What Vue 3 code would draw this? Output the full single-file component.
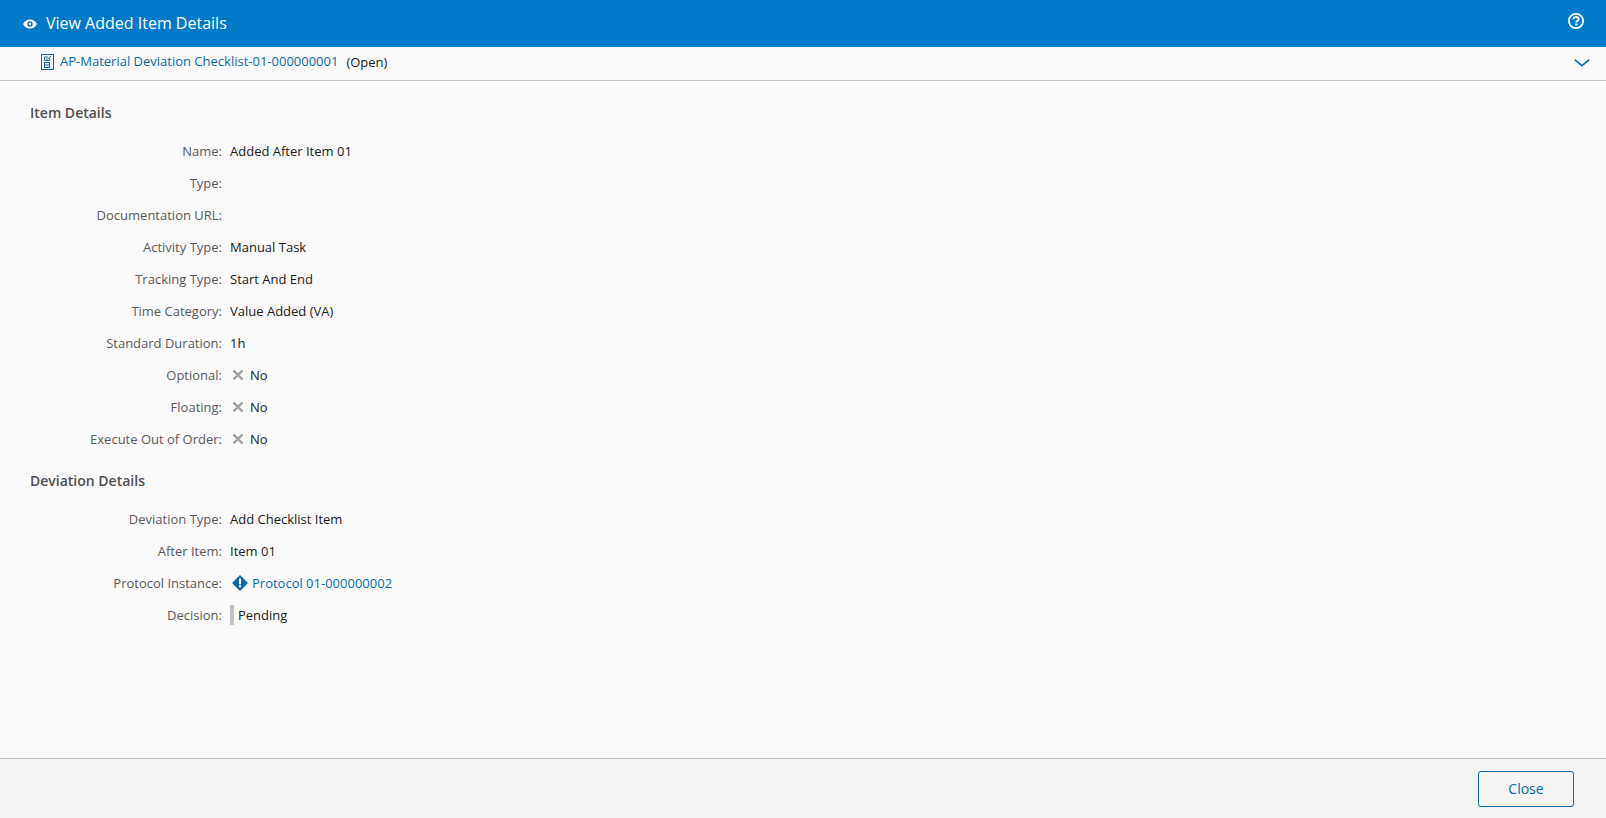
<script setup>
const itemRows = [
  { label: 'Name', value: 'Added After Item 01' },
  { label: 'Type', value: '' },
  { label: 'Documentation URL', value: '' },
  { label: 'Activity Type', value: 'Manual Task' },
  { label: 'Tracking Type', value: 'Start And End' },
  { label: 'Time Category', value: 'Value Added (VA)' },
  { label: 'Standard Duration', value: '1h' },
  { label: 'Optional', no: true },
  { label: 'Floating', no: true },
  { label: 'Execute Out of Order', no: true },
]
</script>

<template>
  <div class="page">
    <header class="head">
      <svg class="eye" viewBox="0 0 14 10" width="14" height="10">
        <path fill="#fff" fill-rule="evenodd" d="M0 5C1.6 1.9 4 .4 7 .4s5.400 1.500 7 4.600c-1.600 3.100-4 4.600-7 4.600S1.600 8.100 0 5zm7 2.700a2.700 2.700 0 1 0 0-5.400 2.700 2.700 0 0 0 0 5.400zM7 6.300a1.300 1.300 0 1 1 0-2.600 1.300 1.300 0 0 1 0 2.600z"/>
      </svg>
      <h1 class="title">View Added Item Details</h1>
      <svg class="help" viewBox="0 0 16 16" width="16" height="16">
        <circle cx="8" cy="8" r="7.100" fill="none" stroke="#fff" stroke-width="1.800"/>
        <path d="M5.400 6.300C5.500 4.700 6.600 3.900 8 3.900c1.500 0 2.600.9 2.600 2.200 0 1.100-.7 1.600-1.400 2.100-.6.400-.9.700-.9 1.400" fill="none" stroke="#fff" stroke-width="2"/>
        <rect x="7.200" y="10.500" width="2.200" height="2" fill="#fff"/>
      </svg>
    </header>

    <div class="sub">
      <svg class="check" viewBox="0 0 13 16" width="13" height="16">
        <rect x=".5" y=".5" width="12" height="15" fill="none" stroke="#0a6aa8"/>
        <path d="M8.500 4.500v2h-5v-3.500h3.500M5 4.300l1.300 1.200L9.800 2" fill="none" stroke="#0a6aa8"/>
        <rect x="3.500" y="8.500" width="5" height="5" fill="none" stroke="#0a6aa8"/>
        <path d="M3.500 11h5" stroke="#0a6aa8"/>
      </svg>
      <a class="link">AP-Material Deviation Checklist-01-000000001</a>
      <span class="status">(Open)</span>
      <svg class="chev" viewBox="0 0 16 8" width="16" height="8">
        <path d="M.7.7 8 6.700 15.300.7" fill="none" stroke="#0a6aa8" stroke-width="1.500"/>
      </svg>
    </div>

    <main class="body">
      <h2 class="section">Item Details</h2>
      <div class="rows">
        <div v-for="r in itemRows" :key="r.label" class="row">
          <span class="label">{{ r.label }}:</span>
          <span class="value">
            <template v-if="r.no">
              <svg class="x" viewBox="0 0 12 12" width="12" height="12">
                <path d="M1.500 1.500l9 9M10.500 1.500l-9 9" stroke="#a09ea0" stroke-width="2.400" fill="none"/>
              </svg>
              No
            </template>
            <template v-else>{{ r.value }}</template>
          </span>
        </div>
      </div>

      <h2 class="section second">Deviation Details</h2>
      <div class="rows">
        <div class="row"><span class="label">Deviation Type:</span><span class="value">Add Checklist Item</span></div>
        <div class="row"><span class="label">After Item:</span><span class="value">Item 01</span></div>
        <div class="row">
          <span class="label">Protocol Instance:</span>
          <span class="value">
            <svg class="diamond" viewBox="0 0 16 16" width="16" height="16">
              <path d="M8 0l8 8-8 8-8-8z" fill="#0a6aa8"/>
              <rect x="7" y="3.500" width="2" height="5.800" fill="#fff"/>
              <rect x="7" y="10.300" width="2" height="2" fill="#fff"/>
            </svg>
            <a class="link">Protocol 01-000000002</a>
          </span>
        </div>
        <div class="row">
          <span class="label">Decision:</span>
          <span class="value"><i class="bar"></i>Pending</span>
        </div>
      </div>
    </main>

    <footer class="foot">
      <button class="close" type="button">Close</button>
    </footer>
  </div>
</template>

<style>
html, body { margin: 0; padding: 0; }
</style>

<style scoped>
.page {
  width: 1606px;
  height: 818px;
  display: flex;
  flex-direction: column;
  overflow: hidden;
  background: #fafafa;
  font-family: "Open Sans", sans-serif;
  font-size: 13px;
  color: #1a1a1a;
}
.head {
  height: 47px;
  flex: none;
  background: #0079c8;
  display: flex;
  align-items: center;
  padding: 0 22px 0 23px;
  color: #fff;
}
.eye { margin-right: 9px; }
.title {
  margin: -2px 0 0;
  flex: 1;
  font-size: 16px;
  font-weight: 400;
}
.help { margin-top: -5px; }
.sub {
  height: 33px;
  flex: none;
  border-bottom: 1px solid #c8c8c8;
  display: flex;
  align-items: center;
  padding: 0 16px 0 41px;
}
.check { margin-right: 6px; margin-top: -3px; }
.link { color: #0a6aa8; }
.sub .link { margin-top: -5px; }
.status { margin-left: 8px; margin-top: -3px; flex: 1; }
.chev { margin-top: -1px; }
.body { flex: 1; padding: 22px 0 0 30px; }
.section {
  margin: 0;
  font-size: 14px;
  line-height: 20px;
  font-weight: 600;
  color: #505050;
}
.second { margin-top: 16px; }
.rows { padding-top: 12px; }
.row {
  display: flex;
  height: 32px;
  align-items: center;
}
.label {
  width: 192px;
  text-align: right;
  color: #5a5a5a;
}
.value {
  margin-left: 8px;
  display: flex;
  align-items: center;
}
.x { margin-left: 2px; margin-right: 6px; }
.diamond { margin-left: 2px; margin-right: 4px; }
.bar {
  width: 4px;
  height: 20px;
  background: #c4c4c4;
  margin-right: 4px;
}
.foot {
  height: 59px;
  flex: none;
  border-top: 1px solid #c4c4c4;
  background: #f4f4f4;
  display: flex;
  align-items: center;
  justify-content: flex-end;
  padding-right: 32px;
}
.close {
  width: 96px;
  height: 36px;
  border: 1px solid #0a6aa8;
  border-radius: 3px;
  background: transparent;
  color: #0a6aa8;
  font: inherit;
  font-size: 14px;
  padding: 0;
}
</style>
